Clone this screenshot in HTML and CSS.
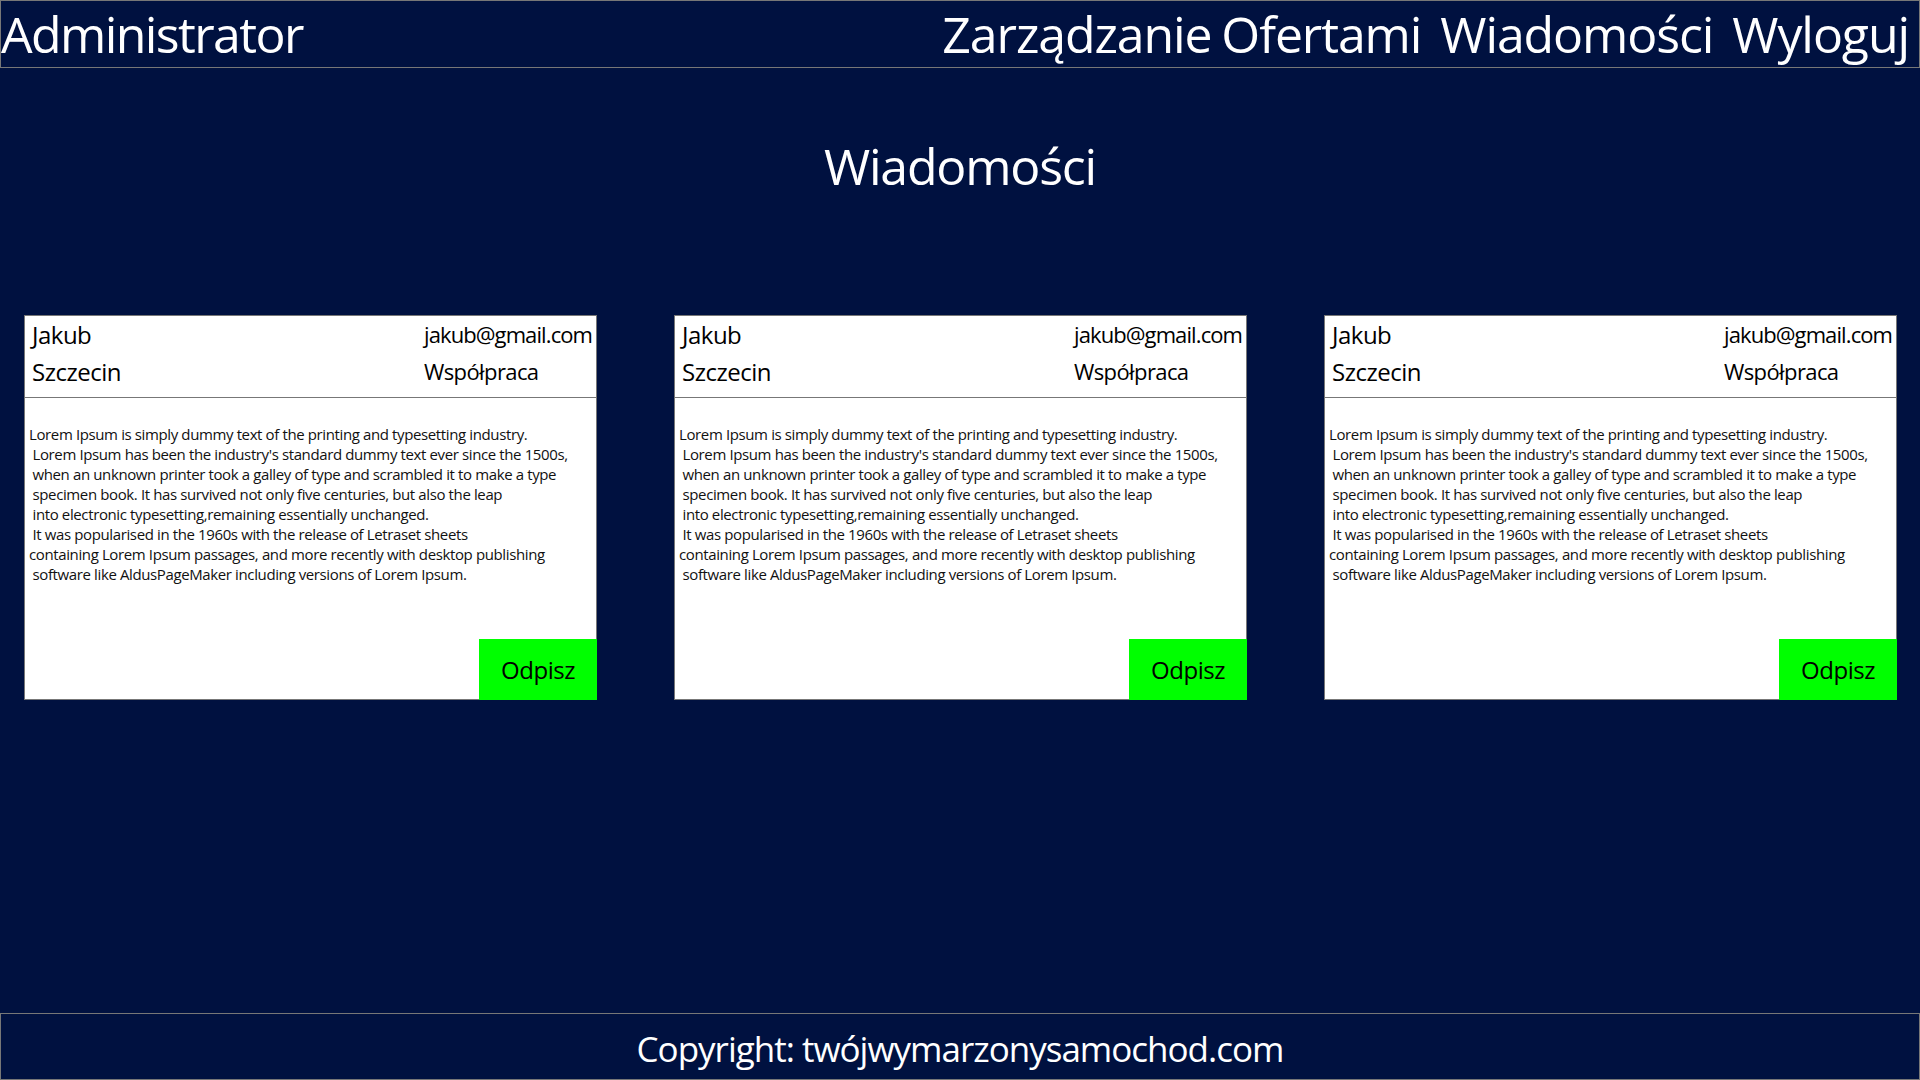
FILE: index.html
```html
<!DOCTYPE html>
<html lang="pl">
<head>
<meta charset="utf-8">
<title>Wiadomości</title>
<link rel="stylesheet" href="styles.css">
</head>
<body>
<header class="topbar">
  <div class="brand">Administrator</div>
  <nav class="nav">
    <a class="nav-link" href="#">Zarządzanie Ofertami</a>
    <a class="nav-link" href="#">Wiadomości</a>
    <a class="nav-link" href="#">Wyloguj</a>
  </nav>
</header>
<main class="content">
  <h1 class="page-title">Wiadomości</h1>
  <section class="cards">
    <article class="card">
      <div class="card-head">
        <span class="name">Jakub</span><span class="email">jakub@gmail.com</span>
        <span class="city">Szczecin</span><span class="topic">Współpraca</span>
      </div>
      <p class="card-text">Lorem Ipsum is simply dummy text of the printing and typesetting industry.
 Lorem Ipsum has been the industry's standard dummy text ever since the 1500s,
 when an unknown printer took a galley of type and scrambled it to make a type
 specimen book. It has survived not only five centuries, but also the leap
 into electronic typesetting,remaining essentially unchanged.
 It was popularised in the 1960s with the release of Letraset sheets
containing Lorem Ipsum passages, and more recently with desktop publishing
 software like AldusPageMaker including versions of Lorem Ipsum.</p>
      <button class="reply" type="button">Odpisz</button>
    </article>
    <article class="card">
      <div class="card-head">
        <span class="name">Jakub</span><span class="email">jakub@gmail.com</span>
        <span class="city">Szczecin</span><span class="topic">Współpraca</span>
      </div>
      <p class="card-text">Lorem Ipsum is simply dummy text of the printing and typesetting industry.
 Lorem Ipsum has been the industry's standard dummy text ever since the 1500s,
 when an unknown printer took a galley of type and scrambled it to make a type
 specimen book. It has survived not only five centuries, but also the leap
 into electronic typesetting,remaining essentially unchanged.
 It was popularised in the 1960s with the release of Letraset sheets
containing Lorem Ipsum passages, and more recently with desktop publishing
 software like AldusPageMaker including versions of Lorem Ipsum.</p>
      <button class="reply" type="button">Odpisz</button>
    </article>
    <article class="card">
      <div class="card-head">
        <span class="name">Jakub</span><span class="email">jakub@gmail.com</span>
        <span class="city">Szczecin</span><span class="topic">Współpraca</span>
      </div>
      <p class="card-text">Lorem Ipsum is simply dummy text of the printing and typesetting industry.
 Lorem Ipsum has been the industry's standard dummy text ever since the 1500s,
 when an unknown printer took a galley of type and scrambled it to make a type
 specimen book. It has survived not only five centuries, but also the leap
 into electronic typesetting,remaining essentially unchanged.
 It was popularised in the 1960s with the release of Letraset sheets
containing Lorem Ipsum passages, and more recently with desktop publishing
 software like AldusPageMaker including versions of Lorem Ipsum.</p>
      <button class="reply" type="button">Odpisz</button>
    </article>
  </section>
</main>
<footer class="footer">Copyright: twójwymarzonysamochod.com</footer>
</body>
</html>
```
FILE: styles.css
```css
* { box-sizing: border-box; }

html, body {
  margin: 0;
  padding: 0;
}

body {
  min-height: 100vh;
  display: flex;
  flex-direction: column;
  background: #001140;
  color: #ffffff;
  font-family: "Open Sans", "Noto Sans", sans-serif;
}

.topbar {
  height: 68px;
  border: 1px solid #777777;
  display: flex;
  justify-content: space-between;
  align-items: center;
  font-size: 50px;
  letter-spacing: -1.1px;
  word-spacing: -2px;
  line-height: 66px;
}

.brand {
  letter-spacing: -1.6px;
}

.nav {
  display: flex;
  gap: 19px;
  padding-right: 10px;
}

.nav-link {
  color: #ffffff;
  text-decoration: none;
}

.content {
  flex: 1;
  display: flex;
  flex-direction: column;
}

.page-title {
  margin: 63px 0 0;
  text-align: center;
  font-size: 50px;
  font-weight: 400;
  letter-spacing: -1.2px;
  line-height: 70px;
}

.cards {
  margin-top: 114px;
  padding: 0 23px 0 24px;
  display: flex;
  justify-content: space-between;
}

.card {
  width: 573px;
  height: 385px;
  background: #ffffff;
  color: #000000;
  border: 1px solid #777777;
  display: flex;
  flex-direction: column;
}

.card-head {
  display: grid;
  grid-template-columns: 392px 1fr;
  grid-auto-rows: 37px;
  padding: 0 0 7px 7px;
  border-bottom: 1px solid #777777;
  font-size: 22px;
  letter-spacing: -0.6px;
  line-height: 37px;
}

.name,
.city {
  font-size: 24px;
  letter-spacing: -0.5px;
}

.email {
  letter-spacing: -0.9px;
}

.card-text {
  margin: 26px 0 0;
  padding-left: 4px;
  white-space: pre;
  font-size: 15px;
  letter-spacing: -0.38px;
  line-height: 20px;
  color: #111111;
}

.reply {
  margin: auto -1px -1px auto;
  width: 118px;
  height: 61px;
  border: none;
  background: #00ff00;
  color: #000000;
  font-family: "Open Sans", "Noto Sans", sans-serif;
  font-size: 24px;
  letter-spacing: -0.5px;
  padding: 0;
  cursor: pointer;
}

.footer {
  height: 67px;
  border: 1px solid #777777;
  display: flex;
  align-items: center;
  justify-content: center;
  font-size: 35px;
  letter-spacing: -1px;
  padding-top: 4px;
}
```
